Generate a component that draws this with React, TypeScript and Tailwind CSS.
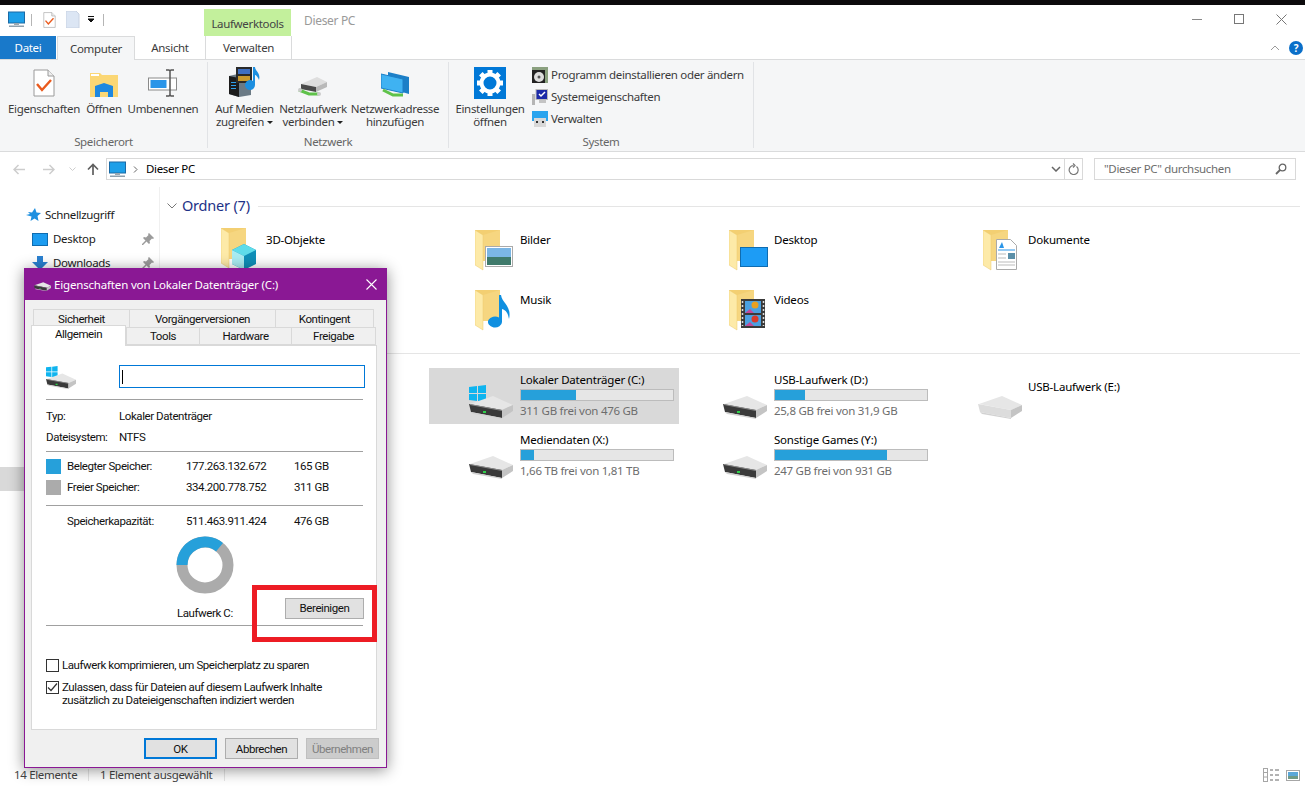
import React from "react";

const Folder = ({ children }: { children?: React.ReactNode }) => (
  <svg width="46" height="44" viewBox="0 0 46 44" className="shrink-0">
    <path d="M0 0h25v31H8z" fill="#f3cf72" />
    <path d="M8 5l17-5v31H8z" fill="#f6d680" />
    <path d="M0 0l8 5v35l-8-5z" fill="#fdeaa8" stroke="#ecca6c" strokeWidth="0.5" />
    {children}
  </svg>
);

const Drive = ({ win = false, w = 44, light = false }: { win?: boolean; w?: number; light?: boolean }) => (
  <svg width={w} height={(w * 34) / 44} viewBox="0 0 44 34" className="shrink-0">
    {win && (
      <path d="M0 2l8-1v7H0zM9 1l8-1v8H9zM0 9h8v7l-8-1zM9 9h8v8l-8-1z" fill="#0fb4ef" />
    )}
    <path d="M1 19l23-8 20 9-11 5z" fill="#e6e6e6" />
    {light ? (
      <path d="M0 19l33 6v8L2 27z" fill="#dcdcdc" />
    ) : (
      <>
        <path d="M0 19l33 6v8L2 27z" fill="#3a3a3a" />
        <path d="M1 19l32 6v1L1 20z" fill="#8a8a8a" />
        <rect x="14" y="26" width="3" height="2" fill="#2fd04a" />
      </>
    )}
    <path d="M33 25l11-5v6l-11 7z" fill="#c4c4c4" />
    <path d="M2 27l31 6v1L4 29z" fill="#d2d2d2" />
  </svg>
);

const Computer = ({ w = 17 }: { w?: number }) => (
  <svg width={w} height={w} viewBox="0 0 17 17" className="shrink-0">
    <rect x="0.500" y="1" width="16" height="11" fill="#1d9fe8" stroke="#1b6aa5" />
    <rect x="6" y="12" width="5" height="2" fill="#9aa7b0" />
    <rect x="1" y="14.500" width="15" height="1.500" fill="#8ea0ad" />
  </svg>
);

const PropsIcon = ({ w = 22, h = 28 }: { w?: number; h?: number }) => (
  <svg width={w} height={h} viewBox="0 0 22 28" className="shrink-0">
    <path d="M1 1h14l6 6v20H1z" fill="#fff" stroke="#9a9a9a" />
    <path d="M15 1v6h6" fill="#eee" stroke="#9a9a9a" />
    <path d="M4 15l5 6 9-10" fill="none" stroke="#ea5a1d" strokeWidth="2.400" />
  </svg>
);

const Pin = () => (
  <svg width="12" height="12" viewBox="0 0 12 12" className="shrink-0">
    <path d="M7 0l5 5-1 1-1-.5-2.500 2.500.5 2-1 1-2.500-2.500L1 12l-1 0 0-1 3.500-3.500L1 5l1-1 2 .5L6.500 2 6 1z" fill="#9b9b9b" />
  </svg>
);

const Caret = () => <span className="inline-block ml-[3px] mb-[2px] w-0 h-0 border-x-[3px] border-x-transparent border-t-[3px] border-t-[#222]" />;

function RibbonButton({ w, icon, lines, caret }: { w: string; icon: React.ReactNode; lines: string[]; caret?: boolean }) {
  return (
    <div className={`${w} flex flex-col items-center text-[#3b3b3b]`}>
      <div className="h-[35px] flex items-end justify-center pb-[3px]">{icon}</div>
      <div className="leading-[13px] mt-[2px] text-center whitespace-nowrap">
        <div>{lines[0]}</div>
        {lines[1] && (
          <div>
            {lines[1]}
            {caret && <Caret />}
          </div>
        )}
      </div>
    </div>
  );
}

function Group({ w, label, children }: { w: string; label: string; children: React.ReactNode }) {
  return (
    <div className={`${w} shrink-0 flex flex-col border-r border-[#e1e3e6] my-[2px] h-[86px]`}>
      <div className="flex-1 flex pt-[3px]">{children}</div>
      <div className="text-center text-[#666] leading-[14px] mb-[-1px]">{label}</div>
    </div>
  );
}

function SmallRow({ icon, text }: { icon: React.ReactNode; text: string }) {
  return (
    <div className="h-[22px] flex items-center gap-[3px] text-[#3b3b3b] whitespace-nowrap">
      <span className="w-[16px] h-[16px] flex items-center justify-center">{icon}</span>
      {text}
    </div>
  );
}

function FolderTile({ name, overlay, up }: { name: string; overlay: React.ReactNode; up?: boolean }) {
  return (
    <div className={`h-[56px] flex pl-[46px] ${up ? "pt-[4px]" : "pt-[6px]"}`}>
      <Folder>{overlay}</Folder>
      <div className={`ml-[-1px] text-black leading-[16px] tracking-[-0.2px] ${up ? "pt-[4px]" : "pt-[2px]"}`}>{name}</div>
    </div>
  );
}

function DriveTile({ name, sub, pct, win, sel }: { name: string; sub: string; pct: string; win?: boolean; sel?: boolean }) {
  return (
    <div className={`h-[56px] flex pl-[40px] ${sel ? "bg-[#d9d9d9]" : ""}`}>
      <div className="w-[51px] pt-[17px]">
        <Drive win={win} />
      </div>
      <div className="w-[154px] pt-[5px]">
        <div className="text-black leading-[14px] whitespace-nowrap tracking-[-0.2px]">{name}</div>
        <div className="h-[12px] mt-[2px] bg-[#e6e6e6] border border-[#bcbcbc]">
          <div className={`h-full bg-[#26a0da] ${pct}`} />
        </div>
        <div className="text-[#6d6d6d] leading-[16px] mt-[2px] whitespace-nowrap tracking-[-0.28px]">{sub}</div>
      </div>
    </div>
  );
}

const Sep = () => <div className="h-px bg-[#a0a0a0] w-[317px]" />;

function Dialog() {
  return (
    <div className="absolute left-[24px] top-[268px] w-[363px] h-[500px] bg-[#f0f0f0] border border-[#8a1894] shadow-[0_2px_14px_rgba(0,0,0,0.45)] flex flex-col text-[#111] font-['Roboto',sans-serif] text-[11.500px] tracking-[-0.42px] z-10">
      <div className="h-[31px] bg-[#8a1894] text-white flex items-center pl-[9px] pr-[9px] shrink-0 font-['Noto_Sans',sans-serif] text-[11.500px] tracking-[-0.17px]">
        <span className="w-[17px] flex items-center"><Drive w={17} /></span>
        <span className="ml-[3px] flex-1 truncate">Eigenschaften von Lokaler Datenträger (C:)</span>
        <svg width="11" height="11" viewBox="0 0 11 11"><path d="M.5.5l10 10M10.500.5l-10 10" stroke="#fff" strokeWidth="1.100" /></svg>
      </div>
      <div className="px-[6px] pt-[9px] flex-1 flex flex-col">
        <div className="relative h-[36px] shrink-0">
          <div className="flex ml-[2px] h-[18px]">
            {[["w-[97px]", "Sicherheit"], ["w-[147px]", "Vorgängerversionen"], ["w-[99px]", "Kontingent"]].map(([w, t]) => (
              <div key={t} className={`${w} border border-[#d9d9d9] border-b-0 -mr-px flex items-center justify-center pt-[2px] bg-[#f0f0f0]`}>{t}</div>
            ))}
          </div>
          <div className="flex ml-[95px] h-[18px]">
            {[["w-[74px]", "Tools"], ["w-[93px]", "Hardware"], ["w-[85px]", "Freigabe"]].map(([w, t]) => (
              <div key={t} className={`${w} border border-[#d9d9d9] -mr-px flex items-center justify-center pt-[2px] bg-[#f0f0f0]`}>{t}</div>
            ))}
          </div>
          <div className="absolute left-0 top-[16px] w-[95px] h-[21px] bg-white border border-[#d9d9d9] border-b-0 z-10 flex items-start justify-center leading-[17px]">Allgemein</div>
        </div>
        <div className="w-[346px] h-[385px] bg-white border border-[#d9d9d9] pl-[14px] shrink-0">
          <div className="h-[53px] flex items-start pt-[19px]">
            <div className="w-[73px] pt-[1px]"><Drive win w={30} /></div>
            <div className="w-[246px] h-[23px] border border-[#0078d7] flex items-center pl-[2px]"><span className="w-px h-[14px] bg-black" /></div>
          </div>
          <Sep />
          <div className="h-[51px] pt-[6px] leading-[21px]">
            <div className="flex"><span className="w-[73px]">Typ:</span><span>Lokaler Datenträger</span></div>
            <div className="flex"><span className="w-[73px]">Dateisystem:</span><span>NTFS</span></div>
          </div>
          <Sep />
          <div className="h-[53px] pt-[4px] leading-[21px]">
            <div className="flex items-center"><span className="w-[15px] h-[15px] bg-[#26a0da] mr-[6px]" /><span className="w-[119px]">Belegter Speicher:</span><span className="w-[108px]">177.263.132.672</span><span>165 GB</span></div>
            <div className="flex items-center"><span className="w-[15px] h-[15px] bg-[#ababab] mr-[6px]" /><span className="w-[119px]">Freier Speicher:</span><span className="w-[108px]">334.200.778.752</span><span>311 GB</span></div>
          </div>
          <Sep />
          <div className="h-[119px]">
            <div className="flex pl-[21px] pt-[7px] leading-[16px]"><span className="w-[119px]">Speicherkapazität:</span><span className="w-[108px]">511.463.911.424</span><span>476 GB</span></div>
            <svg width="58" height="58" viewBox="0 0 58 58" className="ml-[130px] mt-[7px]">
              <circle cx="29" cy="29" r="23" fill="none" stroke="#ababab" strokeWidth="11" />
              <path d="M6 29A23 23 0 0 1 43.500 11.200" fill="none" stroke="#26a0da" strokeWidth="11" />
            </svg>
            <div className="flex items-start">
              <span className="ml-[131px] w-[60px] mt-[11px] leading-[16px]">Laufwerk C:</span>
              <button className="ml-[48px] mt-[4px] w-[79px] h-[21px] bg-[#e1e1e1] border border-[#adadad] leading-[17px] text-center">Bereinigen</button>
            </div>
          </div>
          <Sep />
          <div className="pt-[33px] leading-[13px]">
            <div className="flex items-center"><span className="w-[13px] h-[13px] border border-[#333] bg-white" /><span className="ml-[3px]">Laufwerk komprimieren, um Speicherplatz zu sparen</span></div>
            <div className="flex items-start mt-[9px]">
              <span className="w-[13px] h-[13px] border border-[#333] bg-white flex items-center justify-center shrink-0">
                <svg width="11" height="11" viewBox="0 0 11 11"><path d="M1 5.500l3 3 6-7" fill="none" stroke="#333" strokeWidth="1.200" /></svg>
              </span>
              <span className="ml-[3px]">Zulassen, dass für Dateien auf diesem Laufwerk Inhalte<br />zusätzlich zu Dateieigenschaften indiziert werden</span>
            </div>
          </div>
        </div>
        <div className="flex justify-end gap-[8px] mt-[8px] mr-[1px]">
          <button className="w-[73px] h-[21px] bg-[#e1e1e1] border-2 border-[#0078d7] leading-[16px] text-center">OK</button>
          <button className="w-[73px] h-[21px] bg-[#e1e1e1] border border-[#adadad] leading-[18px] text-center">Abbrechen</button>
          <button className="w-[73px] h-[21px] bg-[#cccccc] border border-[#bfbfbf] text-[#808080] leading-[18px] text-center">Übernehmen</button>
        </div>
      </div>
      <div className="absolute left-[227px] top-[316px] w-[125px] h-[57px] border-[5px] border-[#ed1c24]" />
    </div>
  );
}

export default function App() {
  return (
    <div className="relative w-[1305px] h-[786px] overflow-hidden bg-white font-['Noto_Sans',sans-serif] text-[11.500px] tracking-[-0.33px] flex flex-col">
      <div className="h-[5px] bg-[#0c0a0c] shrink-0" />
      {/* title row */}
      <div className="h-[31px] flex shrink-0 relative">
        <div className="flex items-center pl-[8px] pb-[2px]">
          <Computer />
          <span className="w-px h-[12px] bg-[#b5b5b5] ml-[6px]" />
          <span className="ml-[11px]"><PropsIcon w={13} h={16} /></span>
          <svg width="14" height="17" viewBox="0 0 14 17" className="ml-[10px]"><path d="M0 0h10l3 3v14H0z" fill="#dce6f4" stroke="#c8d2e2" /></svg>
          <svg width="8" height="7" viewBox="0 0 8 7" className="ml-[7px]"><path d="M1 .5h6M1 3h6l-3 3z" stroke="#111" fill="#111" /></svg>
          <span className="w-px h-[12px] bg-[#b5b5b5] ml-[8px]" />
        </div>
        <div className="ml-[100px] w-[87px] mt-[4px] h-[27px] bg-[#c3f09c] text-[#444] flex items-center justify-center pt-[2px]">Laufwerktools</div>
        <div className="ml-[13px] pt-[8px] text-[#9a9a9a] leading-[16px] text-[12px]">Dieser PC</div>
        <div className="ml-auto flex items-start pt-[7px] pr-[18px] gap-[31px]">
          <svg width="11" height="11" viewBox="0 0 11 11" className="mt-[2px]"><path d="M0 5.500h10" stroke="#888" /></svg>
          <svg width="11" height="11" viewBox="0 0 11 11" className="mt-[2px]"><rect x=".5" y=".5" width="9" height="9" fill="none" stroke="#777" /></svg>
          <svg width="11" height="11" viewBox="0 0 11 11" className="mt-[2px]"><path d="M.5.5l10 10M10.500.5l-10 10" stroke="#777" /></svg>
        </div>
      </div>
      {/* tabs row */}
      <div className="h-[24px] flex shrink-0 border-b border-[#dadbdc] relative">
        <div className="w-[56px] h-[23px] bg-[#1979ca] text-white flex items-center justify-center">Datei</div>
        <div className="ml-[1px] w-[78px] h-[24px] bg-[#f5f6f7] border border-[#dadbdc] border-b-0 flex items-center justify-center text-[#3b3b3b]">Computer</div>
        <div className="w-[70px] flex items-center justify-center text-[#3b3b3b]">Ansicht</div>
        <div className="w-[87px] h-[23px] border-x border-[#dadbdc] flex items-center justify-center text-[#3b3b3b]">Verwalten</div>
        <div className="ml-auto flex items-center pr-[2px] gap-[9px]">
          <svg width="10" height="6" viewBox="0 0 10 6"><path d="M1 5l4-4 4 4" fill="none" stroke="#9a9a9a" /></svg>
          <span className="w-[14px] h-[14px] rounded-full bg-[#0a6fc9] text-white text-[10px] font-bold flex items-center justify-center leading-none">?</span>
        </div>
      </div>
      {/* ribbon */}
      <div className="h-[92px] bg-[#f5f6f7] border-b border-[#dadbdc] flex shrink-0">
        <Group w="w-[208px]" label="Speicherort">
          <div className="flex pl-[6px]">
            <RibbonButton w="w-[76px]" icon={<PropsIcon />} lines={["Eigenschaften"]} />
            <RibbonButton w="w-[44px]" lines={["Öffnen"]} icon={
              <svg width="28" height="24" viewBox="0 0 28 24"><path d="M0 0h10l2 2h16v22H0z" fill="#fbd775" /><rect x="1" y="1" width="8" height="2" fill="#fff" /><path d="M5 24V13l9-3 9 3v11h-5v-5h-8v5z" fill="#1e88e0" /></svg>
            } />
            <RibbonButton w="w-[74px]" lines={["Umbenennen"]} icon={
              <svg width="30" height="28" viewBox="0 0 30 28"><rect x=".5" y="9" width="28" height="12" fill="#fff" stroke="#8a8a8a" /><rect x="2.500" y="11" width="16" height="8" fill="#2a95e8" /><path d="M22 2v24M18 1h3l1 1 1-1h3M18 27h3l1-1 1 1h3" fill="none" stroke="#555" strokeWidth="1.500" /></svg>
            } />
          </div>
        </Group>
        <Group w="w-[241px]" label="Netzwerk">
          <div className="flex pl-[4px]">
            <RibbonButton w="w-[65px]" caret lines={["Auf Medien", "zugreifen"]} icon={
              <svg width="32" height="30" viewBox="0 0 32 30"><path d="M0 9l13-3 9 3v19l-12 2-10-3z" fill="#6b7a85" /><path d="M0 9l10 2v19l-10-3z" fill="#1c1c1c" /><rect x="2" y="15" width="5" height="1" fill="#2f9fe8" /><rect x="2" y="18" width="5" height="1" fill="#2f9fe8" /><rect x="2" y="21" width="5" height="1" fill="#2f9fe8" /><rect x="7" y="0" width="16" height="16" fill="#2a2a2a" /><rect x="9" y="2" width="12" height="5" fill="#3f6fc0" /><rect x="9" y="9" width="12" height="5" fill="#c9992c" /><path d="M24 0h2c0 4 6 6 4 13-1-3-3-5-4-5v10a5 5 0 1 1-2-4z" fill="#1c8fe0" /></svg>
            } />
            <RibbonButton w="w-[72px]" caret lines={["Netzlaufwerk", "verbinden"]} icon={
              <svg width="30" height="20" viewBox="0 0 30 20"><path d="M3 7L19 0l10 5-11 5z" fill="#dedede" /><path d="M3 7l15 3v5L3 12z" fill="#4a4a4a" /><path d="M18 10l11-5v5l-11 5z" fill="#b9b9b9" /><path d="M1 13l10 4h10" fill="none" stroke="#5fc24a" strokeWidth="3" /><circle cx="2" cy="13" r="2" fill="#ccc" /><circle cx="21" cy="17" r="2" fill="#ccc" /></svg>
            } />
            <RibbonButton w="w-[92px]" lines={["Netzwerkadresse", "hinzufügen"]} icon={
              <svg width="28" height="25" viewBox="0 0 28 25"><path d="M7 0l21 5v17L7 16z" fill="#1c7fc7" /><path d="M0 2l22 5v14L0 16z" fill="#3fb2f2" stroke="#1c7fc7" /><path d="M2 18l10 5h10" fill="none" stroke="#5fc24a" strokeWidth="3" /></svg>
            } />
          </div>
        </Group>
        <Group w="w-[305px]" label="System">
          <div className="flex pl-[3px]">
            <RibbonButton w="w-[76px]" lines={["Einstellungen", "öffnen"]} icon={
              <svg width="32" height="32" viewBox="0 0 32 32" className="mb-[-2px]">
                <rect width="32" height="32" fill="#0078d7" />
                <circle cx="16" cy="16" r="8.500" fill="none" stroke="#fff" strokeWidth="4" />
                <g stroke="#fff" strokeWidth="5">
                  <path d="M16 3v5M16 24v5M3 16h5M24 16h5M6.800 6.800l3.500 3.500M21.700 21.700l3.500 3.500M25.200 6.800l-3.500 3.500M10.300 21.700l-3.500 3.500" />
                </g>
              </svg>
            } />
            <div className="ml-[4px] mt-[-1px]">
              <SmallRow text="Programm deinstallieren oder ändern" icon={
                <svg width="16" height="16" viewBox="0 0 16 16"><rect width="16" height="16" fill="#8aa07f" /><rect y="3" width="13" height="13" fill="#222" /><circle cx="7" cy="10" r="5" fill="#ddd" /><circle cx="7" cy="10" r="1.500" fill="#555" /></svg>
              } />
              <SmallRow text="Systemeigenschaften" icon={
                <svg width="16" height="16" viewBox="0 0 16 16"><rect x="4" y="0.500" width="11.500" height="10" fill="#1c2aa8" stroke="#bbb" /><path d="M7 5l2 2 4-4" fill="none" stroke="#fff" strokeWidth="1.500" /><rect x="0" y="5" width="3" height="11" fill="#b5b5b5" /><rect x="7" y="11" width="7" height="3" fill="#c4c4c4" /></svg>
              } />
              <SmallRow text="Verwalten" icon={
                <svg width="16" height="16" viewBox="0 0 16 16"><rect width="16" height="10" fill="#2aa4ee" /><rect x="2" y="7" width="12" height="9" fill="#d8d8d8" /><rect x="4" y="10" width="2" height="2" fill="#333" /><rect x="10" y="10" width="2" height="2" fill="#333" /></svg>
              } />
            </div>
          </div>
        </Group>
      </div>
      {/* address */}
      <div className="h-[35px] flex items-center shrink-0 pb-[1px]">
        <div className="w-[106px] flex items-center pl-[13px]">
          <svg width="12" height="11" viewBox="0 0 12 11"><path d="M12 5.500H1M5.500 1L1 5.500 5.500 10" fill="none" stroke="#cdcdcd" strokeWidth="1.500" /></svg>
          <svg width="12" height="11" viewBox="0 0 12 11" className="ml-[18px]"><path d="M0 5.500h11M6.500 1L11 5.500 6.500 10" fill="none" stroke="#cdcdcd" strokeWidth="1.500" /></svg>
          <svg width="7" height="5" viewBox="0 0 7 5" className="ml-[14px]"><path d="M.5.500l3 3 3-3" fill="none" stroke="#cdcdcd" /></svg>
          <svg width="12" height="12" viewBox="0 0 12 12" className="ml-[11px]"><path d="M6 12V1.500M1 6.500l5-5 5 5" fill="none" stroke="#5f5f5f" strokeWidth="1.700" /></svg>
        </div>
        <div className="w-[977px] h-[22px] border border-[#d9d9d9] flex items-center">
          <span className="ml-[2px]"><Computer /></span>
          <svg width="5" height="7" viewBox="0 0 5 7" className="ml-[7px]"><path d="M1 .5l3 3-3 3" fill="none" stroke="#666" /></svg>
          <span className="ml-[8px] text-black">Dieser PC</span>
          <svg width="10" height="6" viewBox="0 0 10 6" className="ml-auto mr-[3px]"><path d="M1 1l4 4 4-4" fill="none" stroke="#666" strokeWidth="1.500" /></svg>
          <span className="h-full w-[18px] border-l border-[#d9d9d9] flex items-center justify-center">
            <svg width="11" height="12" viewBox="0 0 11 12"><path d="M8.500 3.500A4.500 4.500 0 1 1 5.500 2.500M5 .5l2 2-2 2" fill="none" stroke="#777" strokeWidth="1.200" /></svg>
          </span>
        </div>
        <div className="ml-[11px] w-[202px] h-[22px] border border-[#d9d9d9] flex items-center pl-[9px] pr-[8px] text-[#6d6d6d]">
          <span>"Dieser PC" durchsuchen</span>
          <svg width="12" height="12" viewBox="0 0 12 12" className="ml-auto"><circle cx="7.500" cy="4.500" r="3.300" fill="none" stroke="#666" strokeWidth="1.300" /><path d="M5 7l-4 4" stroke="#666" strokeWidth="1.800" /></svg>
        </div>
      </div>
      {/* main */}
      <div className="flex-1 flex min-h-0">
        <div className="w-[160px] shrink-0 border-r border-[#f0f0f0] pt-[16px] text-[#1a1a1a] leading-[24px]">
          <div className="h-[24px] flex items-center pl-[26px]">
            <svg width="15" height="14" viewBox="0 0 15 14"><path d="M9 0l1.500 4.500L15 5l-3.500 3 1 5-4-2.500L4.500 13l1-4.500L0 7l4-1L2 4l4 .5z" fill="#1e90e0" /></svg>
            <span className="ml-[4px]">Schnellzugriff</span>
          </div>
          <div className="h-[24px] flex items-center pl-[32px] pr-[5px]">
            <svg width="16" height="13" viewBox="0 0 16 13"><rect x=".5" y=".5" width="15" height="12" fill="#1c9cf0" stroke="#0f6cb0" /></svg>
            <span className="ml-[5px]">Desktop</span><span className="ml-auto"><Pin /></span>
          </div>
          <div className="h-[24px] flex items-center pl-[32px] pr-[5px]">
            <svg width="16" height="15" viewBox="0 0 16 15"><path d="M5 0h6v6h5l-8 8-8-8h5z" fill="#2a80d0" /></svg>
            <span className="ml-[5px]">Downloads</span><span className="ml-auto"><Pin /></span>
          </div>
          <div className="h-[192px]" />
          <div className="h-[24px] bg-[#d9d9d9]" />
        </div>
        <div className="flex-1 min-w-0 pt-[7px]">
          <div className="flex items-center h-[24px] pl-[8px] pr-[5px]">
            <svg width="10" height="6" viewBox="0 0 10 6" className="ml-[-1px]"><path d="M.5.5L5 5 9.500.5" fill="none" stroke="#777" /></svg>
            <span className="ml-[5px] text-[14.500px] tracking-[-0.2px] text-[#1e3287]">Ordner (7)</span>
            <span className="flex-1 h-px bg-[#e5e5e5] ml-[8px]" />
          </div>
          <div className="grid grid-cols-[repeat(4,250px)] gap-[4px] ml-[15px] mt-[6px]">
            <FolderTile up name="3D-Objekte" overlay={<g><path d="M11 22l12-6 12 6v14l-12 6-12-6z" fill="#0f8fb8" /><path d="M11 22l12 6 12-6-12-6z" fill="#5edcea" /><path d="M11 22l12 6v14l-12-6z" fill="#a9ecf2" /></g>} />
            <FolderTile name="Bilder" overlay={<g><rect x="10.500" y="16.500" width="27" height="20" fill="#fff" stroke="#aaa" /><rect x="12" y="18" width="24" height="9" fill="#7bb6e5" /><rect x="12" y="27" width="24" height="8" fill="#3f7a6b" /></g>} />
            <FolderTile name="Desktop" overlay={<rect x="11.500" y="17.500" width="27" height="19" fill="#1d9cf5" stroke="#0f6cb0" />} />
            <FolderTile name="Dokumente" overlay={<g><path d="M13.500 9.500h14l6 6v24h-20z" fill="#fff" stroke="#aaa" /><path d="M15 20h17" stroke="#2a95e8" /><path d="M15 24h8M15 28h8M15 32h17M15 35h17" stroke="#bbb" /><rect x="25" y="23" width="7" height="6" fill="#5b8fa8" /><path d="M16 18l3-6 2 6z" fill="#2a95e8" /></g>} />
            <div />
            <FolderTile name="Musik" overlay={<path d="M24 5h2c1 8 11 11 8 24-1-6-3-9-7-10v13a7 5.500 0 1 1-3-4.500z" fill="#0f8fe0" />} />
            <FolderTile name="Videos" overlay={<g><rect x="12" y="9" width="24" height="29" fill="#3a3a3a" /><path d="M13.500 11v25M34.500 11v25" stroke="#ddd" strokeWidth="1.500" strokeDasharray="2 2" /><rect x="16" y="11" width="16" height="12" fill="#4aa0e0" /><rect x="16" y="25" width="16" height="11" fill="#4aa0e0" /><circle cx="26" cy="15" r="3.500" fill="#e8a020" /><circle cx="26" cy="29" r="3.500" fill="#d83a2a" /><path d="M16 23l5-4 4 4zM16 36l5-4 4 4z" fill="#c04a9a" /></g>} />
            <div />
          </div>
          <div className="h-px bg-[#e5e5e5] mt-[13px] mb-[14px] mr-[5px]" />
          <div className="grid grid-cols-[repeat(4,250px)] gap-[4px] ml-[15px]">
            <div />
            <DriveTile sel win name="Lokaler Datenträger (C:)" sub="311 GB frei von 476 GB" pct="w-[36%]" />
            <DriveTile name="USB-Laufwerk (D:)" sub="25,8 GB frei von 31,9 GB" pct="w-[20%]" />
            <div className="h-[56px] flex pl-[41px]">
              <div className="w-[50px] pt-[17px]"><Drive light /></div>
              <div className="pt-[11px] text-black leading-[16px] whitespace-nowrap tracking-[-0.2px]">USB-Laufwerk (E:)</div>
            </div>
            <div />
            <DriveTile name="Mediendaten (X:)" sub="1,66 TB frei von 1,81 TB" pct="w-[8.500%]" />
            <DriveTile name="Sonstige Games (Y:)" sub="247 GB frei von 931 GB" pct="w-[73.500%]" />
            <div />
          </div>
        </div>
      </div>
      {/* status */}
      <div className="h-[21px] shrink-0 flex items-center pl-[14px] pb-[1px] text-[#444] bg-white whitespace-nowrap">
        <span className="w-[74px]">14 Elemente</span>
        <span className="w-px h-[12px] bg-[#e5e5e5]" />
        <span className="ml-[11px] w-[124px]">1 Element ausgewählt</span>
        <span className="w-px h-[12px] bg-[#e5e5e5]" />
        <div className="ml-auto pr-[5px] flex items-center gap-[6px]">
          <svg width="17" height="14" viewBox="0 0 17 14"><rect x=".5" y=".5" width="4" height="13" fill="#fff" stroke="#a6a6a6" /><path d="M1 4.500h3M1 9h3" stroke="#a6a6a6" /><path d="M7 2h3M12 2h4M7 7h3M12 7h4M7 12h3M12 12h4" stroke="#666" /></svg>
          <svg width="14" height="11" viewBox="0 0 14 11"><rect x=".5" y=".5" width="13" height="10" fill="#fff" stroke="#a6a6a6" /><rect x="2" y="2" width="10" height="4" fill="#5aa7d8" /><rect x="2" y="6" width="10" height="3" fill="#6f9a86" /></svg>
        </div>
      </div>
      <Dialog />
    </div>
  );
}
